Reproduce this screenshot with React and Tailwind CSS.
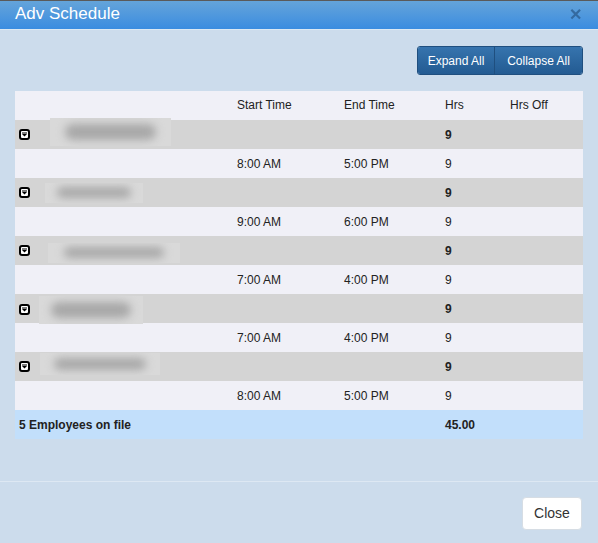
import React from "react";

const rows = [
  { start: "8:00 AM", end: "5:00 PM", blur: { ml: 20, w: 121, h: 28, mt: -5 } },
  { start: "9:00 AM", end: "6:00 PM", blur: { ml: 15, w: 98, h: 20, mt: 0 } },
  { start: "7:00 AM", end: "4:00 PM", blur: { ml: 18, w: 132, h: 20, mt: 4 } },
  { start: "7:00 AM", end: "4:00 PM", blur: { ml: 9, w: 104, h: 28, mt: 2 } },
  { start: "8:00 AM", end: "5:00 PM", blur: { ml: 10, w: 120, h: 22, mt: -5 } },
];

const cols = "grid grid-cols-[218px_107px_101px_65px_77px]";

function ToggleIcon() {
  return (
    <svg width="11" height="11" viewBox="0 0 11 11" className="shrink-0">
      <rect x="1" y="1" width="9" height="9" rx="2" fill="#fff" stroke="#000" strokeWidth="2" />
      <rect x="3" y="3.5" width="5" height="1" fill="#000" />
      <path d="M3 5 L8 5 L5.5 7.6 Z" fill="#000" />
    </svg>
  );
}

function Blur({ b }) {
  return (
    <div
      className="relative bg-[#d9d9d9] overflow-hidden shrink-0"
      style={{ marginLeft: b.ml, width: b.w, height: b.h, marginTop: b.mt }}
    >
      <div className="absolute left-[12%] right-[12%] top-[22%] bottom-[22%] bg-[#a8a8a8] rounded-full blur-[4px]" />
    </div>
  );
}

export default function App() {
  return (
    <div
      className="w-[598px] h-[543px] bg-[#ccdcec] flex flex-col overflow-hidden"
      style={{ fontFamily: '"Liberation Sans", Arial, sans-serif' }}
    >
      <div className="h-[30px] shrink-0 bg-gradient-to-b from-[#64a4da] to-[#3a8ce0] border-t border-[#5a5a5a] border-b border-b-[#dce8f3] flex items-center justify-between pl-[15px] pr-[16px]">
        <span className="text-white text-[17px] leading-none -mt-[3px]">Adv Schedule</span>
        <span className="text-[#2d5f92] opacity-80 text-[16px] font-bold leading-none">✕</span>
      </div>

      <div className="flex-1 flex flex-col px-[15px]">
        <div className="flex justify-end mt-[16px]">
          <div className="flex rounded-[3px] overflow-hidden border border-[#1f4f7f]">
            <button className="w-[77px] h-[27px] bg-gradient-to-b from-[#3674ae] to-[#235b92] text-white text-[12px] border-r border-[#1f4f7f]">
              Expand All
            </button>
            <button className="w-[87px] h-[27px] bg-gradient-to-b from-[#3674ae] to-[#235b92] text-white text-[12px]">
              Collapse All
            </button>
          </div>
        </div>

        <div className="mt-[16px] text-[12px] text-[#222]">
          <div className={`${cols} h-[29px] items-center bg-[#f0f0f7]`}>
            <div />
            <div className="pl-1 -mt-[2px]">Start Time</div>
            <div className="pl-1 -mt-[2px]">End Time</div>
            <div className="pl-1 -mt-[2px]">Hrs</div>
            <div className="pl-1 -mt-[2px]">Hrs Off</div>
          </div>
          {rows.map((r, i) => (
            <React.Fragment key={i}>
              <div className={`${cols} h-[29px] items-center bg-[#d4d4d4]`}>
                <div className="flex items-center pl-1 h-full">
                  <ToggleIcon />
                  <Blur b={r.blur} />
                </div>
                <div />
                <div />
                <div className="pl-1 font-bold">9</div>
                <div />
              </div>
              <div className={`${cols} h-[29px] items-center bg-[#f0f0f7]`}>
                <div />
                <div className="pl-1">{r.start}</div>
                <div className="pl-1">{r.end}</div>
                <div className="pl-1">9</div>
                <div />
              </div>
            </React.Fragment>
          ))}
          <div className={`${cols} h-[29px] items-center bg-[#c2dffb] font-bold`}>
            <div className="pl-1">5 Employees on file</div>
            <div />
            <div />
            <div className="pl-1">45.00</div>
            <div />
          </div>
        </div>
      </div>

      <div className="h-[62px] shrink-0 border-t border-[#dde8f3] flex items-start justify-end pr-[16px] pt-[15px]">
        <button className="w-[60px] h-[33px] bg-white rounded-[4px] border border-[#d6dde4] text-[#333] text-[14px]">
          Close
        </button>
      </div>
    </div>
  );
}
